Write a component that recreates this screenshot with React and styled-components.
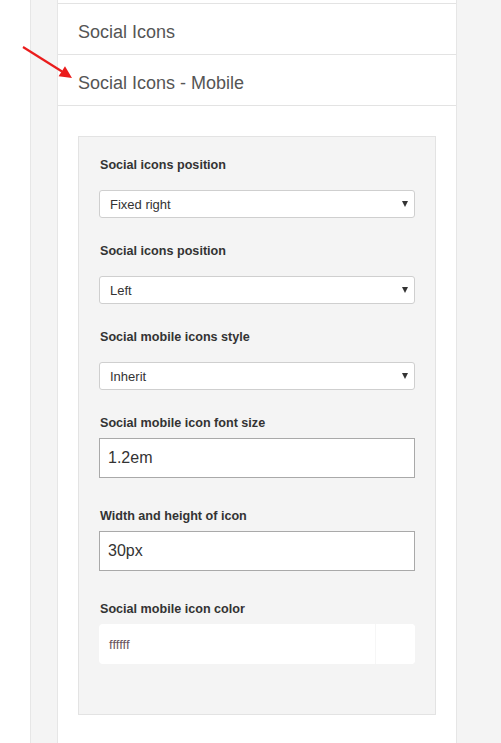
import React from "react";
import styled, { createGlobalStyle } from "styled-components";

const GlobalStyle = createGlobalStyle`
  html, body {
    margin: 0;
    padding: 0;
    background: #fff;
  }
  body {
    font-family: "Liberation Sans", Arial, sans-serif;
  }
`;

const Page = styled.div`
  position: relative;
  display: flex;
  min-height: 743px;
  background: #fff;
`;

const Gutter = styled.div`
  width: 30px;
  flex-shrink: 0;
`;

const Strip = styled.div`
  width: 26px;
  flex-shrink: 0;
  background: #f4f4f4;
  border-left: 1px solid #e6e6e6;
  border-right: 1px solid #e6e6e6;
`;

const Main = styled.div`
  width: 398px;
  flex-shrink: 0;
  background: #fff;
  border-right: 1px solid #e6e6e6;
`;

const Filler = styled.div`
  flex: 1;
  background: #f4f4f4;
`;

const TopEdge = styled.div`
  height: 3px;
  border-bottom: 1px solid #e3e3e3;
`;

const SectionRow = styled.div`
  box-sizing: border-box;
  height: 51px;
  display: flex;
  align-items: center;
  padding: 6px 20px 0;
  font-size: 18px;
  color: #555;
  border-bottom: 1px solid #e3e3e3;
`;

const Body = styled.div`
  padding: 30px 20px 0;
`;

const Panel = styled.div`
  background: #f4f4f4;
  border: 1px solid #e3e3e3;
  padding: 20px 20px 50px;
`;

const Field = styled.div`
  margin-top: ${(p) => p.$top}px;
`;

const Label = styled.div`
  font-size: 12.6px;
  font-weight: bold;
  line-height: 17px;
  color: #333;
  padding-left: 1px;
  margin-bottom: ${(p) => p.$gap}px;
`;

const SelectBox = styled.div`
  height: 26px;
  display: flex;
  align-items: center;
  justify-content: space-between;
  padding: 0 6px 0 10px;
  background: #fff;
  border: 1px solid #cfcfcf;
  border-radius: 3px;
  font-size: 13px;
  color: #333;
`;

const Caret = styled.span`
  width: 0;
  height: 0;
  border-left: 3.5px solid transparent;
  border-right: 3.5px solid transparent;
  border-top: 6px solid #333;
`;

const TextInput = styled.input`
  display: block;
  box-sizing: border-box;
  width: 100%;
  height: 40px;
  margin: 0;
  padding: 0 8px;
  border: 1px solid #a9a9a9;
  border-radius: 0;
  background: #fff;
  font-family: "Liberation Sans", Arial, sans-serif;
  font-size: 16px;
  color: #333;
  outline: none;
`;

const ColorField = styled.div`
  height: 40px;
  display: flex;
  background: #fff;
  border-radius: 4px;
  overflow: hidden;
`;

const ColorText = styled.div`
  flex: 1;
  display: flex;
  align-items: center;
  padding-left: 10px;
  font-size: 13px;
  color: #6a5560;
`;

const Swatch = styled.div`
  width: 39px;
  background: ${(p) => p.$color};
  border-left: 1px solid #f6f6f6;
`;

const Arrow = styled.svg`
  position: absolute;
  left: 0;
  top: 0;
  pointer-events: none;
`;

const Select = ({ value }) => (
  <SelectBox>
    <span>{value}</span>
    <Caret />
  </SelectBox>
);

export default function App() {
  return (
    <>
      <GlobalStyle />
      <Page>
        <Gutter />
        <Strip />
        <Main>
          <TopEdge />
          <SectionRow>Social Icons</SectionRow>
          <SectionRow>Social Icons - Mobile</SectionRow>
          <Body>
            <Panel>
              <Field $top={0}>
                <Label $gap={16}>Social icons position</Label>
                <Select value="Fixed right" />
              </Field>
              <Field $top={25}>
                <Label $gap={16}>Social icons position</Label>
                <Select value="Left" />
              </Field>
              <Field $top={25}>
                <Label $gap={16}>Social mobile icons style</Label>
                <Select value="Inherit" />
              </Field>
              <Field $top={25}>
                <Label $gap={6}>Social mobile icon font size</Label>
                <TextInput defaultValue="1.2em" />
              </Field>
              <Field $top={30}>
                <Label $gap={6}>Width and height of icon</Label>
                <TextInput defaultValue="30px" />
              </Field>
              <Field $top={30}>
                <Label $gap={6}>Social mobile icon color</Label>
                <ColorField>
                  <ColorText>ffffff</ColorText>
                  <Swatch $color="#ffffff" />
                </ColorField>
              </Field>
            </Panel>
          </Body>
        </Main>
        <Filler />
        <Arrow width="90" height="90" viewBox="0 0 90 90">
          <line x1="23" y1="47" x2="62" y2="71.5" stroke="#ea1c1c" strokeWidth="2.2" />
          <polygon points="72,78 58.6,76.2 65,66.2" fill="#ea1c1c" />
        </Arrow>
      </Page>
    </>
  );
}
